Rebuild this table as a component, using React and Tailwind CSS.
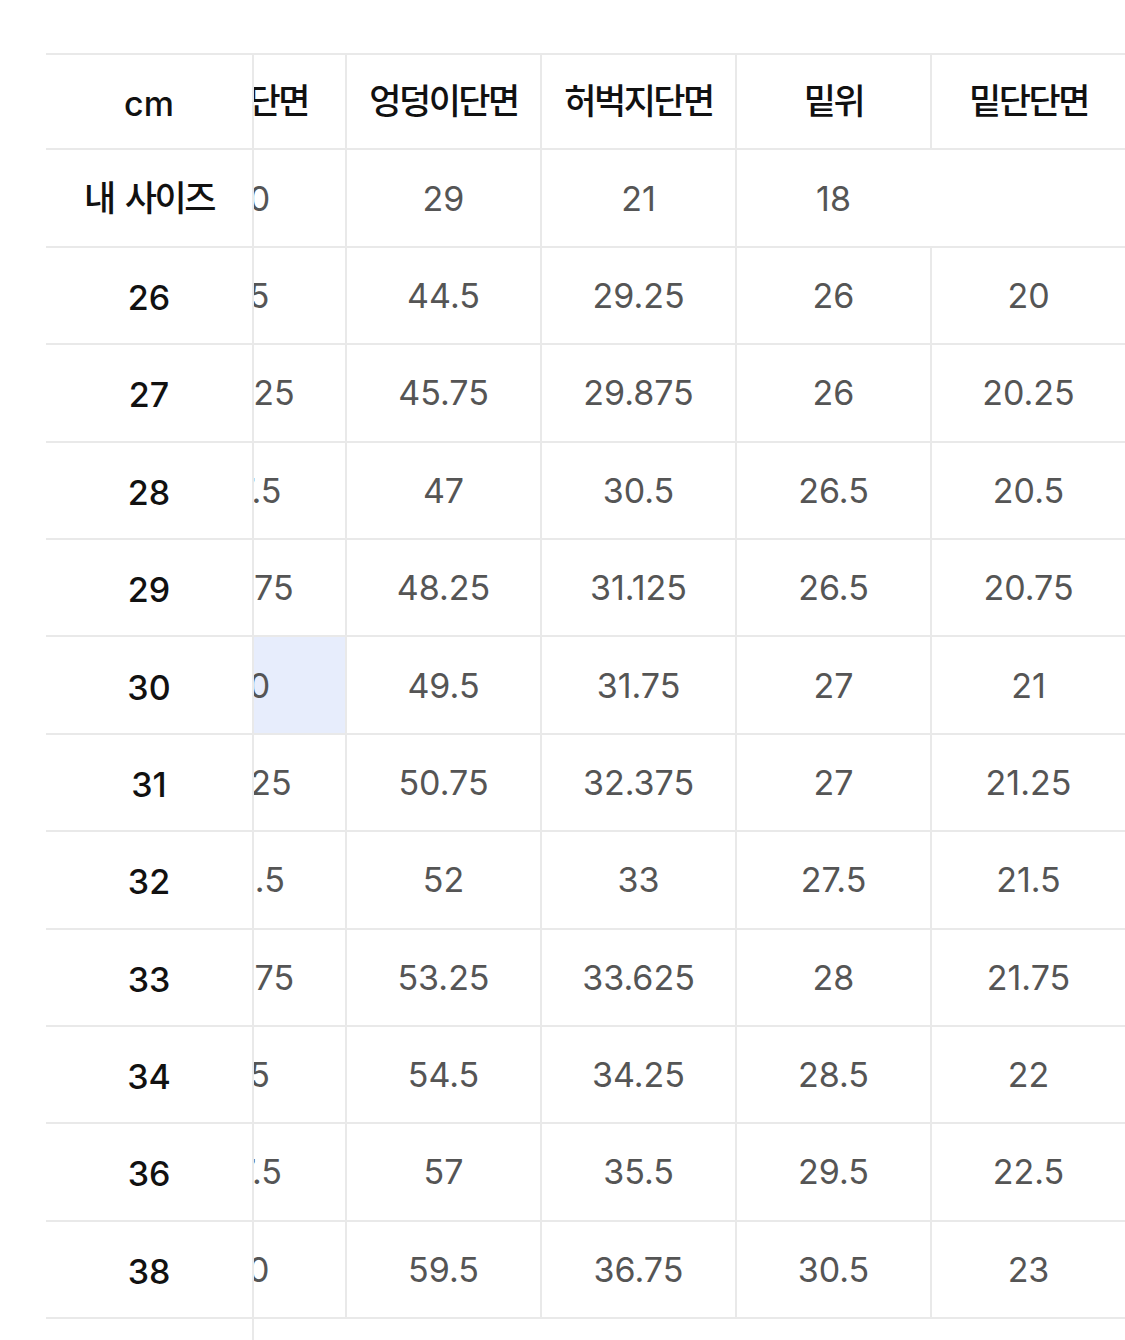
const headers = ["허리단면", "엉덩이단면", "허벅지단면", "밑위", "밑단단면"];

const mySize = ["40", "29", "21", "18", ""];

const rows = [
    { size: "26", values: ["35", "44.5", "29.25", "26", "20"] },
    { size: "27", values: ["36.25", "45.75", "29.875", "26", "20.25"] },
    { size: "28", values: ["37.5", "47", "30.5", "26.5", "20.5"] },
    { size: "29", values: ["38.75", "48.25", "31.125", "26.5", "20.75"] },
    { size: "30", values: ["40", "49.5", "31.75", "27", "21"], match: true },
    { size: "31", values: ["41.25", "50.75", "32.375", "27", "21.25"] },
    { size: "32", values: ["42.5", "52", "33", "27.5", "21.5"] },
    { size: "33", values: ["43.75", "53.25", "33.625", "28", "21.75"] },
    { size: "34", values: ["45", "54.5", "34.25", "28.5", "22"] },
    { size: "36", values: ["47.5", "57", "35.5", "29.5", "22.5"] },
    { size: "38", values: ["50", "59.5", "36.75", "30.5", "23"] },
];

const kr = { fontFamily: '"Noto Sans CJK KR", "Noto Sans", sans-serif' };
const num = { fontFamily: 'Inter, "Liberation Sans", sans-serif' };

const App = () => {
    return (
        <div className="min-h-screen bg-white pt-[53px] pl-[46px] flex overflow-hidden">
            {/* Fixed first column */}
            <div className="w-[208px] shrink-0 border-r-2 border-[#e9e9e9]">
                <div className="h-[97.4px] border-t-2 border-b-2 border-[#e9e9e9] flex items-center justify-center pt-1 text-[34px] font-medium text-[#111]" style={num}>
                    cm
                </div>
                <div className="h-[97.4px] border-b-2 border-[#e9e9e9] flex items-center justify-center gap-[11px] pb-1 text-[35px] font-medium tracking-[-2.5px] text-[#111]" style={kr}>
                    <span>내</span>
                    <span>사이즈</span>
                </div>
                {rows.map((r) => (
                    <div key={r.size} className="h-[97.4px] border-b-2 border-[#e9e9e9] flex items-center justify-center pt-1 text-[34px] font-medium text-[#111]" style={num}>
                        {r.size}
                    </div>
                ))}
            </div>

            {/* Scrolled part of the table */}
            <div className="flex-1 overflow-hidden">
                <div className="-ml-[102px] w-max">
                    <div className="flex h-[97.4px] border-t-2 border-b-2 border-[#e9e9e9]">
                        {headers.map((h) => (
                            <div key={h} className="w-[195px] border-r-2 border-[#e9e9e9] flex items-center justify-center pb-1 text-[35px] font-medium tracking-[-2.5px] text-[#111]" style={kr}>
                                {h}
                            </div>
                        ))}
                    </div>
                    <div className="flex h-[97.4px] border-b-2 border-[#e9e9e9]">
                        {mySize.map((v, i) => (
                            <div key={i} className={`w-[195px] border-r-2 flex items-center justify-center text-[34px] text-[#555] ${i === 3 ? "border-transparent" : "border-[#e9e9e9]"}`} style={num}>
                                {v}
                            </div>
                        ))}
                    </div>
                    {rows.map((r) => (
                        <div key={r.size} className="flex h-[97.4px] border-b-2 border-[#e9e9e9]">
                            {r.values.map((v, i) => (
                                <div key={i} className={`w-[195px] border-r-2 border-[#e9e9e9] flex items-center justify-center text-[34px] text-[#555] ${r.match && i === 0 ? "bg-[#e7edfc]" : "bg-white"}`} style={num}>
                                    {v}
                                </div>
                            ))}
                        </div>
                    ))}
                </div>
            </div>
        </div>
    );
};

export default App;
